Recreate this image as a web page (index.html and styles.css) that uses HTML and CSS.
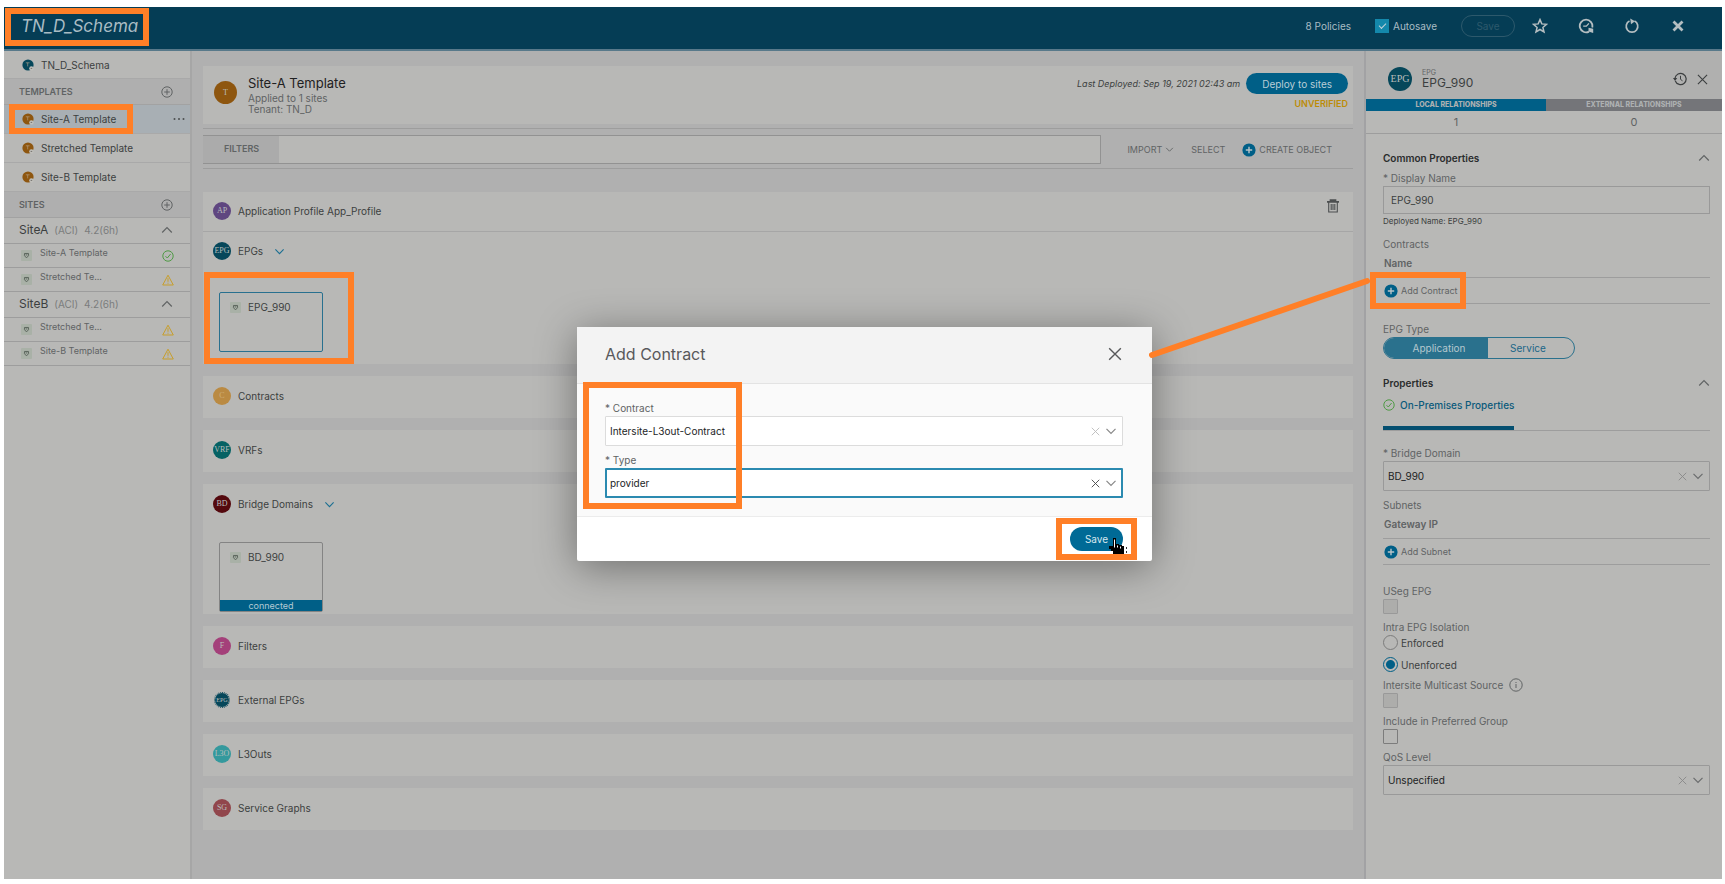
FILE: index.html
```html
<!DOCTYPE html>
<html lang="en">
<head>
<meta charset="utf-8">
<title>TN_D_Schema</title>
<meta name="viewport" content="width=device-width, initial-scale=1">
<link rel="stylesheet" href="styles.css">
</head>
<body>
<svg class="sprite" aria-hidden="true">
  <symbol id="i-down" viewBox="0 0 12 12"><path d="M1.5 3.8 6 8.3l4.500-4.500" fill="none" stroke="currentColor" stroke-width="1.200"/></symbol>
  <symbol id="i-up" viewBox="0 0 12 12"><path d="M1.200 8.500 6 3.700l4.800 4.800" fill="none" stroke="currentColor" stroke-width="1.200"/></symbol>
  <symbol id="i-close" viewBox="0 0 12 12"><path d="M1 1l10 10M11 1 1 11" fill="none" stroke="currentColor" stroke-width="1.200"/></symbol>
  <symbol id="i-add" viewBox="0 0 12 12"><circle cx="6" cy="6" r="5.200" fill="none" stroke="currentColor"/><path d="M6 3.200v5.600M3.200 6h5.600" stroke="currentColor"/></symbol>
  <symbol id="i-plus" viewBox="0 0 14 14"><circle cx="7" cy="7" r="6.600" fill="#005f87"/><path d="M7 3.800v6.400M3.800 7h6.400" stroke="#b8c4c8" stroke-width="1.400"/></symbol>
  <symbol id="i-ok" viewBox="0 0 12 12"><circle cx="6" cy="6" r="5.200" fill="none" stroke="#4f9a45"/><path d="M3.500 6.200 5.300 8l3.300-4" fill="none" stroke="#4f9a45"/></symbol>
  <symbol id="i-warn" viewBox="0 0 12 12"><path d="M6 1.200 11.300 11H.7z" fill="none" stroke="#c79e2b" stroke-linejoin="round"/><path d="M6 4.200v3.600M6 8.700v1" stroke="#c79e2b"/></symbol>
  <symbol id="i-site" viewBox="0 0 12 12"><rect width="12" height="12" rx="1" fill="#a9b1a7"/><path d="M3.800 3.800h4.400v2.400L6 8.600 3.800 6.200z" fill="none" stroke="#566058" stroke-width="1"/><path d="M5 5.400h2" stroke="#566058"/></symbol>
  <symbol id="i-node" viewBox="0 0 12 12"><circle cx="6" cy="6" r="5.600" fill="currentColor"/><path d="M3.800 3.800h3.800M5.700 3.800v3.600" stroke="#b8a890" stroke-width=".6"/><circle cx="9.400" cy="9.400" r="2.200" fill="#c0bfbb"/><path d="M8.600 9.400h1.600" stroke="#55524c" stroke-width=".7"/></symbol>
</svg>

<div class="app">
  <header class="topbar">
    <h1 class="topbar-title callout callout-title">TN_D_Schema</h1>
    <div class="topbar-tools">
      <span>8 Policies</span>
      <label class="autosave"><input type="checkbox" class="tick" checked> Autosave</label>
      <button type="button" class="ghost-pill" disabled>Save</button>
      <button type="button" class="tool" aria-label="Favourite"><svg viewBox="0 0 16 16"><path d="M8 1.600l1.800 4.300 4.700.4-3.600 3.100 1.100 4.600L8 11.500 4 14l1.100-4.600L1.500 6.300l4.700-.4z" fill="none" stroke="currentColor" stroke-width="1.500"/></svg></button>
      <button type="button" class="tool" aria-label="Deployment status"><svg viewBox="0 0 16 16"><path d="M14.200 9.500A6.300 6.300 0 1 0 11 13.600" fill="none" stroke="currentColor" stroke-width="1.800"/><path d="M5.200 8.200h3.200l2.500-2.800" fill="none" stroke="currentColor" stroke-width="1.300"/><path d="M10.500 9.800l4.700 1v4.200l-4.700-1.500z" fill="currentColor"/></svg></button>
      <button type="button" class="tool" aria-label="Refresh"><svg viewBox="0 0 16 16"><path d="M10.500 3.100A5.800 5.800 0 1 1 5.500 3.100" fill="none" stroke="currentColor" stroke-width="1.700"/><path d="M6.200.6 11 3.300 7 6.200z" fill="currentColor"/></svg></button>
      <button type="button" class="tool" aria-label="Close schema"><svg viewBox="0 0 16 16"><path d="M3.500 3.500l9 9M12.500 3.500l-9 9" stroke="currentColor" stroke-width="2.800"/></svg></button>
    </div>
  </header>

  <div class="columns">
    <nav class="sidebar" aria-label="Schema">
      <a href="#schema" class="side-row side-schema"><svg class="ic12 teal"><use href="#i-node"/></svg>TN_D_Schema</a>
      <h2 class="side-head">TEMPLATES<button type="button" aria-label="Add template"><svg class="ic12"><use href="#i-add"/></svg></button></h2>
      <div class="side-row active">
        <a href="#site-a" class="callout callout-site"><svg class="ic12 amber"><use href="#i-node"/></svg>Site-A Template</a>
        <button type="button" class="more" aria-label="More actions"><svg viewBox="0 0 12 4"><circle cx="1.500" cy="2" r="1" /><circle cx="6" cy="2" r="1"/><circle cx="10.500" cy="2" r="1"/></svg></button>
      </div>
      <a href="#stretched" class="side-row"><svg class="ic12 amber"><use href="#i-node"/></svg>Stretched Template</a>
      <a href="#site-b" class="side-row"><svg class="ic12 amber"><use href="#i-node"/></svg>Site-B Template</a>
      <h2 class="side-head">SITES<button type="button" aria-label="Add site"><svg class="ic12"><use href="#i-add"/></svg></button></h2>
      <h3 class="site-head">SiteA <small>(ACI)</small><small>4.2(6h)</small><button type="button" aria-label="Collapse SiteA"><svg class="ic12"><use href="#i-up"/></svg></button></h3>
      <a href="#a1" class="site-row"><svg class="ic10"><use href="#i-site"/></svg><span>Site-A Template</span><svg class="ic12"><use href="#i-ok"/></svg></a>
      <a href="#a2" class="site-row"><svg class="ic10"><use href="#i-site"/></svg><span>Stretched Te...</span><svg class="ic12"><use href="#i-warn"/></svg></a>
      <h3 class="site-head">SiteB <small>(ACI)</small><small>4.2(6h)</small><button type="button" aria-label="Collapse SiteB"><svg class="ic12"><use href="#i-up"/></svg></button></h3>
      <a href="#b1" class="site-row"><svg class="ic10"><use href="#i-site"/></svg><span>Stretched Te...</span><svg class="ic12"><use href="#i-warn"/></svg></a>
      <a href="#b2" class="site-row"><svg class="ic10"><use href="#i-site"/></svg><span>Site-B Template</span><svg class="ic12"><use href="#i-warn"/></svg></a>
    </nav>

    <main class="content">
      <section class="template-card">
        <span class="badge badge-t">T</span>
        <div class="template-info">
          <h2>Site-A Template</h2>
          <p>Applied to 1 sites</p>
          <p>Tenant: TN_D</p>
        </div>
        <div class="deploy">
          <div class="deploy-line"><em>Last Deployed: Sep 19, 2021 02:43 am</em><button type="button" class="pill">Deploy to sites</button></div>
          <strong>UNVERIFIED</strong>
        </div>
      </section>

      <div class="filterbar">
        <div class="filter"><label for="filters">FILTERS</label><input id="filters" type="text"></div>
        <div class="actions">
          <button type="button">IMPORT <svg class="ic8"><use href="#i-down"/></svg></button>
          <button type="button">SELECT</button>
          <button type="button"><svg class="ic14"><use href="#i-plus"/></svg>CREATE OBJECT</button>
        </div>
      </div>

      <section class="block block-first">
        <h3 class="block-head block-app"><span class="badge purple">AP</span>Application Profile App_Profile
          <button type="button" class="trash" aria-label="Delete"><svg viewBox="0 0 14 14"><path d="M1 2.900h12M4.500 2.500V1.200h5v1.300" fill="none" stroke="currentColor" stroke-width="1.700"/><path d="M2.700 3v10h8.600V3M5.200 5v6M7 5v6M8.800 5v6" fill="none" stroke="currentColor" stroke-width="1.100"/></svg></button></h3>
        <h3 class="block-head"><span class="badge deepteal">EPG</span>EPGs<svg class="ic10 blue"><use href="#i-down"/></svg></h3>
        <div class="tiles"><div class="callout callout-epg"><a href="#epg" class="tile selected"><svg class="ic10"><use href="#i-site"/></svg><span>EPG_990</span></a></div></div>
      </section>
      <section class="block"><h3 class="block-head"><span class="badge gold">C</span>Contracts</h3></section>
      <section class="block"><h3 class="block-head"><span class="badge vrf">VRF</span>VRFs</h3></section>
      <section class="block">
        <h3 class="block-head"><span class="badge maroon">BD</span>Bridge Domains<svg class="ic10 blue"><use href="#i-down"/></svg></h3>
        <div class="tiles"><a href="#bd" class="tile"><svg class="ic10"><use href="#i-site"/></svg><span>BD_990</span><b>connected</b></a></div>
      </section>
      <section class="block"><h3 class="block-head"><span class="badge pink">F</span>Filters</h3></section>
      <section class="block"><h3 class="block-head"><span class="badge external">EPG</span>External EPGs</h3></section>
      <section class="block"><h3 class="block-head"><span class="badge cyan">L3O</span>L3Outs</h3></section>
      <section class="block"><h3 class="block-head"><span class="badge rose">SG</span>Service Graphs</h3></section>
    </main>

    <aside class="details" aria-label="EPG_990">
      <header class="details-head">
        <span class="badge badge-epg">EPG</span>
        <div class="details-name"><small>EPG</small><h2>EPG_990</h2></div>
        <button type="button" aria-label="History"><svg class="ic14" viewBox="0 0 14 14"><path d="M2.300 9A5.600 5.600 0 1 0 2 6.200" fill="none" stroke="currentColor" stroke-width="1.200"/><path d="M0 6h4.200L2.100 9z" fill="currentColor"/><path d="M7.500 3.800v3.500l2 1.500" fill="none" stroke="currentColor"/></svg></button>
        <button type="button" aria-label="Close panel"><svg class="ic10"><use href="#i-close"/></svg></button>
      </header>
      <div class="relations">
        <div><strong>LOCAL RELATIONSHIPS</strong><span>1</span></div>
        <div><strong>EXTERNAL RELATIONSHIPS</strong><span>0</span></div>
      </div>

      <form class="props">
        <h3 class="props-head">Common Properties<svg class="ic12"><use href="#i-up"/></svg></h3>
        <label class="lbl" for="dname">* Display Name</label>
        <input class="text" id="dname" type="text" value="EPG_990">
        <p class="hint">Deployed Name: EPG_990</p>
        <p class="lbl lbl-list">Contracts</p>
        <p class="col-name">Name</p>
        <div class="add-row"><button type="button" class="callout callout-add"><svg class="ic14"><use href="#i-plus"/></svg>Add Contract</button></div>
        <p class="lbl lbl-type">EPG Type</p>
        <div class="toggle"><button type="button" class="on" aria-pressed="true">Application</button><button type="button" aria-pressed="false">Service</button></div>
        <h3 class="props-head props-second">Properties<svg class="ic12"><use href="#i-up"/></svg></h3>
        <div class="tabs"><a href="#onprem"><svg class="ic12"><use href="#i-ok"/></svg>On-Premises Properties</a></div>
        <label class="lbl" for="bd">* Bridge Domain</label>
        <div class="pick"><select id="bd"><option>BD_990</option></select><button type="button" aria-label="Clear bridge domain"><svg class="ic8"><use href="#i-close"/></svg></button><svg class="ic12"><use href="#i-down"/></svg></div>
        <p class="lbl lbl-subnets">Subnets</p>
        <p class="col-name">Gateway IP</p>
        <div class="add-row"><button type="button"><svg class="ic14"><use href="#i-plus"/></svg>Add Subnet</button></div>
        <label class="lbl lbl-useg" for="useg">USeg EPG</label>
        <input class="box" id="useg" type="checkbox" disabled>
        <p class="lbl">Intra EPG Isolation</p>
        <label class="radio"><input type="radio" name="iso">Enforced</label>
        <label class="radio radio-last"><input type="radio" name="iso" checked>Unenforced</label>
        <label class="lbl" for="mcast">Intersite Multicast Source <svg class="ic14" viewBox="0 0 14 14"><circle cx="7" cy="7" r="6.200" fill="none" stroke="currentColor"/><path d="M7 6v4M7 4v1" stroke="currentColor"/></svg></label>
        <input class="box" id="mcast" type="checkbox" disabled>
        <label class="lbl" for="pref">Include in Preferred Group</label>
        <input class="box" id="pref" type="checkbox">
        <label class="lbl" for="qos">QoS Level</label>
        <div class="pick"><select id="qos"><option>Unspecified</option></select><button type="button" aria-label="Clear QoS level"><svg class="ic8"><use href="#i-close"/></svg></button><svg class="ic12"><use href="#i-down"/></svg></div>
      </form>
    </aside>
  </div>
</div>

<div class="modal-layer">
  <div class="modal" role="dialog" aria-labelledby="modal-title">
    <header class="modal-head"><h2 id="modal-title">Add Contract</h2><button type="button" aria-label="Close"><svg class="ic14"><use href="#i-close"/></svg></button></header>
    <div class="modal-body">
      <label class="lbl" for="contract">* Contract</label>
      <div class="pick"><select id="contract"><option>Intersite-L3out-Contract</option></select><button type="button" aria-label="Clear contract"><svg class="ic8"><use href="#i-close"/></svg></button><svg class="ic12"><use href="#i-down"/></svg></div>
      <label class="lbl" for="type">* Type</label>
      <div class="pick focused"><select id="type"><option>provider</option></select><button type="button" aria-label="Clear type"><svg class="ic8"><use href="#i-close"/></svg></button><svg class="ic12"><use href="#i-down"/></svg></div>
      <span class="mark"></span>
    </div>
    <footer class="modal-foot">
      <button type="button" class="pill-save callout callout-save">Save</button>
      <svg class="cursor" viewBox="0 0 20 18"><path d="M4 0h3v6h3v1h3v1h2v8H4v-3H2v-2H0V8h4z" fill="#000"/><path d="M5.500 1.500v8M8.500 7.500v2M11.500 8.500v2" stroke="#fff" stroke-width="1"/><path d="M17 9h1v2h-1zM17 13h1v2h-1z" fill="#333"/></svg>
    </footer>
    <svg class="connector" viewBox="0 0 224 84"><path d="M3 80 218 6" stroke="#ff7f27" stroke-width="6" stroke-linecap="round"/></svg>
  </div>
</div>
</body>
</html>
```

FILE: styles.css
```css
*, *::before, *::after { box-sizing: border-box; }

:root {
  --panel: #b8b8b6;
  --canvas: #b0b0b0;
  --line: #9d9d9d;
  --text: #3c3f40;
  --muted: #606364;
  --blue: #005f87;
  --mark: #ff7f27;
}

body {
  margin: 0;
  background: #fff;
  color: var(--text);
  font: 10px/16px Inter, "Liberation Sans", sans-serif;
}

h1, h2, h3, p { margin: 0; font-size: inherit; font-weight: 400; }
a { color: inherit; text-decoration: none; }
button, input, select { font: inherit; color: inherit; }
button { padding: 0; border: 0; background: none; display: flex; align-items: center; justify-content: center; }
svg { flex: none; display: block; }

.sprite { position: absolute; width: 0; height: 0; }
.ic8 { width: 9px; height: 9px; }
.ic10 { width: 11px; height: 11px; }
.ic12 { width: 12px; height: 12px; }
.ic14 { width: 14px; height: 14px; }
.amber { color: #8e560f; }
.teal { color: #06475a; }
.blue { color: #1b6f92; }

/* Orange highlight frames */
.callout { position: relative; }
.callout::after, .mark { content: ""; position: absolute; border: 6px solid var(--mark); pointer-events: none; }
.callout-title::after { inset: -6px -11px -8px -16px; }
.callout-site::after { inset: -7px -17px -7px -13px; }
.callout-epg::after { inset: 0; }
.callout-add::after { inset: -11px -8px -10px -14px; }
.callout-save::after { inset: -9px -14px; }

.app { display: flex; flex-direction: column; min-height: calc(100vh - 12px); margin: 7px 3px 5px 4px; }

.topbar {
  display: flex; align-items: center; justify-content: space-between;
  min-height: 44px; padding: 0 33px 4px 17px;
  background: #053d55; border-bottom: 2px solid #58798a; color: #a9bcc4;
}
.topbar-title { font-size: 17px; line-height: 24px; font-style: italic; }
.topbar-tools { display: flex; align-items: center; gap: 24px; font-size: 10px; }
.autosave { display: flex; align-items: center; gap: 4px; }
.tick { appearance: none; width: 14px; height: 14px; margin: 0; background: #1488ab; position: relative; }
.tick::after { content: ""; position: absolute; left: 4px; top: 4px; width: 7px; height: 4px; border: solid #c3d3d9; border-width: 0 0 1px 1px; transform: rotate(-45deg); }
.ghost-pill { width: 54px; height: 22px; margin-right: -10px; border: 1px solid #2d596c; border-radius: 11px; color: #2d596c; }
.tool { width: 22px; height: 22px; color: #b5bec1; }
.tool svg { width: 16px; height: 16px; }

.columns { flex: 1; display: grid; grid-template-columns: 188px minmax(0, 1fr) 358px; }

.sidebar { background: var(--panel); border-right: 2px solid #a6a6a6; }
.side-row { display: flex; align-items: center; gap: 7px; min-height: 29px; padding: 0 5px 0 18px; border-bottom: 1px solid #a9a9a9; }
.side-schema { min-height: 28px; }
.side-row a { display: flex; align-items: center; gap: 7px; flex: none; }
.active { background: #a8afb4; }
.more { margin-left: auto; }
.more svg { width: 12px; height: 4px; fill: #4c4f50; }
.side-head, .site-head { display: flex; align-items: center; min-height: 26px; padding: 0 17px 0 15px; }
.side-head { background: #afafaf; border-bottom: 1px solid #a2a2a2; color: var(--muted); font-size: 9px; font-weight: 600; }
.side-head button, .site-head button { margin-left: auto; }
.site-head { gap: 6px; padding-bottom: 2px; border-bottom: 1px solid var(--line); font-size: 12px; }
.site-head small { color: #7b7d7d; font-size: 10px; }
.site-head button { color: var(--muted); }
.site-row { display: flex; gap: 8px; min-height: 24px; padding: 1px 16px 1px 17px; border-bottom: 1px solid var(--line); font-size: 9px; color: var(--muted); }
.site-row .ic10, .site-row .ic12 { align-self: center; }
.site-row span { flex: 1; line-height: 16px; }

.content { padding: 15px 11px 24px; background: var(--canvas); }
.template-card { display: flex; gap: 11px; min-height: 58px; padding: 7px 5px 5px 11px; background: var(--panel); }
.badge {
  display: inline-flex; align-items: center; justify-content: center; flex: none;
  width: 18px; height: 18px; border-radius: 50%;
  color: #b9bdbb; font: 8px/8px "Liberation Serif", serif;
}
.badge-t { width: 23px; height: 23px; margin-top: 8px; background: #8e560f; }
.purple { background: #5f4680; }
.deepteal { background: #06475a; }
.gold { background: #ba8a42; color: #cfae78; }
.vrf { background: #056264; }
.maroon { background: #54090e; }
.pink { background: #a4407a; }
.external { width: 14px; height: 14px; margin: 0 2px; background: #06475a; outline: 1px dotted #06475a; font-size: 6px; }
.cyan { background: #34999d; }
.rose { background: #91464c; }
.template-info { flex: 1; color: var(--muted); line-height: 11px; }
.template-info h2 { color: #1f2122; font-size: 13px; line-height: 20px; }
.deploy { display: flex; flex-direction: column; align-items: flex-end; gap: 2px; }
.deploy-line { display: flex; align-items: center; gap: 6px; font-size: 9px; }
.deploy strong { color: #bd8c08; font-size: 9px; font-weight: 600; }
.pill { min-height: 21px; padding: 0 16px; border-radius: 11px; background: var(--blue); color: #b9cdd6; font-size: 10px; }

.filterbar { display: flex; align-items: center; justify-content: space-between; margin: 4px 0 23px; padding: 6px 21px 4px 0; border: solid var(--line); border-width: 1px 0; }
.filter { display: flex; flex: 0 1 898px; min-height: 29px; border: 1px solid #929292; border-left: 0; background: var(--panel); }
.filter label { display: flex; align-items: center; padding: 0 20px 2px 21px; background: #ababab; color: var(--muted); font-size: 9px; font-weight: 600; }
.filter input { flex: 1; min-width: 0; border: 0; background: none; }
.actions { display: flex; gap: 17px; font-size: 9px; color: var(--muted); }
.actions button { gap: 3px; }

.block { margin-bottom: 12px; background: var(--panel); }
.block-head { display: flex; align-items: center; gap: 7px; min-height: 42px; padding: 0 13px 2px 10px; }
.block-head .ic10 { margin-left: 4px; }
.block-app { border-bottom: 1px solid #a6a6a6; }
.block-first .block-head { min-height: 40px; }
.trash { margin-left: auto; align-self: flex-start; padding-top: 7px; color: #4c4f50; }
.trash svg { width: 14px; height: 14px; }
.tiles { padding: 16px 16px 2px; }
.block-first .tiles { padding: 0 1px; }
.callout-epg { width: 150px; padding: 20px 30px 12px 15px; }
.tile { position: relative; display: flex; gap: 7px; width: 104px; min-height: 60px; padding: 7px 10px; border: 1px solid #848484; border-radius: 2px; line-height: 14px; }
.tiles > .tile { min-height: 70px; }
.tile .ic10 { margin-top: 2px; }
.tile b { position: absolute; inset: auto 0 0; background: var(--blue); color: #b3cad4; font-size: 9px; font-weight: 400; line-height: 11px; text-align: center; }
.selected { border-color: #28708f; }

.details { background: var(--panel); border-left: 2px solid #a2a2a4; }
.details-head { display: flex; align-items: center; gap: 10px; min-height: 48px; padding: 8px 14px 0 22px; background: #b0b0af; }
.badge-epg { width: 24px; height: 24px; background: #06475a; font-size: 10px; }
.details-name { flex: 1; }
.details-name small { display: block; font-size: 7px; line-height: 7px; color: var(--muted); }
.details-name h2 { font-size: 12px; line-height: 14px; }
.relations { display: grid; grid-template-columns: 180px 1fr; border-bottom: 1px solid var(--line); text-align: center; color: var(--muted); }
.relations strong { display: block; background: #747579; color: #adb0b1; font-size: 7px; line-height: 12px; font-weight: 800; }
.relations div:first-child strong { background: var(--blue); }
.relations span { display: block; font-size: 11px; line-height: 22px; }

.props { padding: 14px 12px 0 17px; }
.props-head { display: flex; justify-content: space-between; align-items: center; color: #2a2c2d; font-weight: 600; line-height: 20px; }
.props-head .ic12 { color: var(--muted); }
.lbl { display: flex; align-items: center; gap: 6px; margin-top: 2px; color: var(--muted); }
.text { display: block; width: 100%; height: 28px; padding: 0 7px; border: 1px solid #999; background: none; }
.hint { font-size: 8px; line-height: 14px; }
.lbl-list { margin-top: 8px; }
.col-name { padding: 3px 1px 6px; border-bottom: 1px solid var(--line); color: var(--muted); font-weight: 600; }
.add-row { display: flex; min-height: 26px; padding: 0 1px; border-bottom: 1px solid var(--line); color: var(--muted); font-size: 9px; }
.add-row button { gap: 3px; }
.callout-add { align-self: center; }
.lbl-type { margin-top: 17px; }
.toggle { display: flex; width: 192px; border: 1px solid #2a718d; border-radius: 12px; overflow: hidden; color: #1a6688; }
.toggle button { flex: 1; min-height: 20px; padding-right: 6px; }
.toggle .on { flex: 0 0 104px; padding: 0 0 0 6px; background: #2a718d; color: #b5c7cd; }
.props-second { margin-top: 14px; }
.tabs { display: flex; margin-bottom: 14px; border-bottom: 1px solid var(--line); color: #0b5a7b; font-weight: 500; }
.tabs a { display: flex; align-items: center; gap: 5px; padding: 4px 0 13px; border-bottom: 4px solid #044f70; }
.pick { position: relative; display: flex; align-items: center; }
.pick select { appearance: none; width: 100%; height: 30px; padding: 0 48px 0 4px; border: 1px solid #999; border-radius: 1px; background: none; color: #1c1e1f; }
.pick button { position: absolute; right: 23px; color: #888; }
.pick > svg { position: absolute; right: 6px; color: #6a6c6d; pointer-events: none; }
.lbl-subnets { margin-top: 6px; }
.lbl-useg { margin-top: 18px; }
.box { appearance: none; display: block; width: 15px; height: 15px; margin: 0 0 5px; border: 1px solid #7c7c7c; border-radius: 1px; }
.box:disabled { background: #adadab; border-color: #999; }
.radio { display: flex; align-items: center; gap: 3px; line-height: 14px; margin-bottom: 7px; }
.radio input { appearance: none; width: 15px; height: 15px; margin: 0; border: 1px solid #7c7c7c; border-radius: 50%; }
.radio input:checked { border-color: var(--blue); background: radial-gradient(circle, var(--blue) 4px, transparent 5px); }
.radio-last { margin-bottom: 5px; }

.modal-layer { position: fixed; inset: 4px 0 0 4px; display: flex; align-items: center; justify-content: center; }
.modal { position: relative; width: 575px; border-radius: 2px; background: #fff; box-shadow: 0 6px 40px rgba(0, 0, 0, .4); color: #58595b; }
.modal-head { display: flex; align-items: center; justify-content: space-between; min-height: 57px; padding: 0 30px 2px 28px; background: #f3f3f3; border-bottom: 1px solid #e3e3e3; }
.modal-head h2 { font-size: 16px; line-height: 24px; }
.modal-body { position: relative; padding: 14px 29px 18px 28px; background: #fafafa; border-bottom: 1px solid #ececec; }
.modal .pick { margin-bottom: 6px; }
.modal .pick.focused { margin-bottom: 0; }
.modal .pick select { background: #fff; border-color: #dcdcdc; }
.modal .pick button { color: #bbb; }
.modal .pick > svg { color: #888; }
.modal .focused select { border: 2px solid #2b8ab0; padding-left: 3px; }
.modal .focused button { color: #444; }
.mark { inset: -2px 410px 7px 6px; }
.modal-foot { position: relative; display: flex; justify-content: flex-end; padding: 10px 29px; }
.pill-save { min-width: 53px; min-height: 24px; border-radius: 12px; background: #006a96; color: #d8e8ef; }
.cursor { position: absolute; right: 23px; bottom: 5px; width: 20px; height: 18px; }
.connector { position: absolute; left: 572px; top: -52px; width: 224px; height: 84px; fill: none; }
```
